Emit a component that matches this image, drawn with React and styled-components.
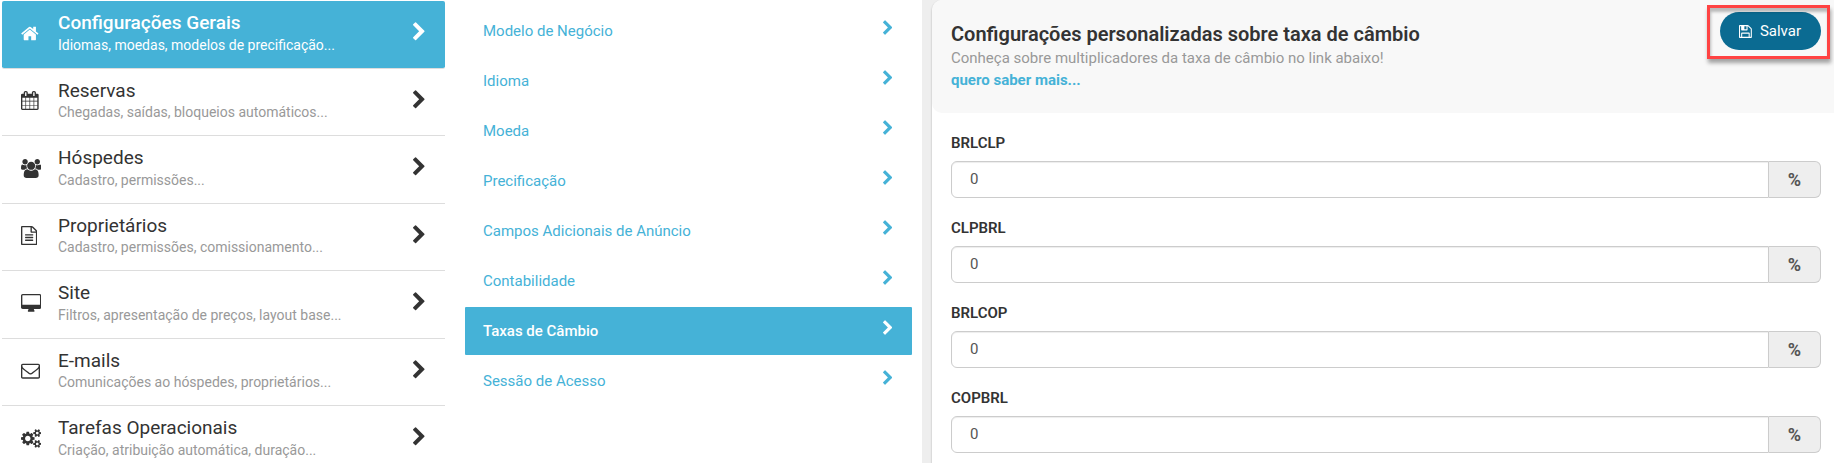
import React from 'react';
import styled, { createGlobalStyle, css } from 'styled-components';

const colors = {
  accent: '#45b2d7',
  text: '#333',
  muted: '#999',
  line: '#ddd',
  border: '#ccc',
};

const GlobalStyle = createGlobalStyle`
  *, *::before, *::after { box-sizing: border-box; }
  body {
    margin: 0;
    background: #fff;
    color: ${colors.text};
    font-family: Roboto, "Liberation Sans", sans-serif;
    font-size: 15px;
    line-height: 1.4;
  }
  a { text-decoration: none; }
`;

const glyphs = {
  home: {
    x: 64, width: 1664,
    d: 'M1472 992v480q0 26-19 45t-45 19h-384v-384h-256v384h-384q-26 0-45-19t-19-45v-480q0-1 .5-3t.5-3l575-474 575 474q1 2 1 6zm223-69l-62 74q-8 9-21 11h-3q-13 0-21-7l-692-577-692 577q-12 8-24 7-13-2-21-11l-62-74q-8-10-7-23.5t11-21.5l719-599q32-26 76-26t76 26l244 204v-195q0-14 9-23t23-9h192q14 0 23 9t9 23v408l219 182q10 8 11 21.5t-7 23.5z',
  },
  calendar: {
    x: 64, width: 1664,
    d: 'M192 1664h288v-288h-288v288zm352 0h320v-288h-320v288zm-352-352h288v-320h-288v320zm352 0h320v-320h-320v320zm-352-384h288v-288h-288v288zm736 736h320v-288h-320v288zm-384-736h320v-288h-320v288zm768 736h288v-288h-288v288zm-384-352h320v-320h-320v320zm-352-864v-288q0-13-9.5-22.5t-22.5-9.5h-64q-13 0-22.5 9.5t-9.5 22.5v288q0 13 9.5 22.5t22.5 9.5h64q13 0 22.5-9.5t9.5-22.5zm736 864h288v-320h-288v320zm-384-384h320v-288h-320v288zm384 0h288v-288h-288v288zm32-480v-288q0-13-9.5-22.5t-22.5-9.5h-64q-13 0-22.5 9.5t-9.5 22.5v288q0 13 9.5 22.5t22.5 9.5h64q13 0 22.5-9.5t9.5-22.5zm384-64v1280q0 52-38 90t-90 38h-1408q-52 0-90-38t-38-90v-1280q0-52 38-90t90-38h128v-96q0-66 47-113t113-47h64q66 0 113 47t47 113v96h384v-96q0-66 47-113t113-47h64q66 0 113 47t47 113v96h128q52 0 90 38t38 90z',
  },
  users: {
    x: 0, width: 1920,
    d: 'M593 896q-162 5-265 128h-134q-82 0-138-40.5t-56-118.5q0-353 124-353 6 0 43.5 21t97.5 42.5 119 21.5q67 0 133-23-5 37-5 66 0 139 81 256zm1071 637q0 120-73 189.5t-194 69.5h-874q-121 0-194-69.5t-73-189.5q0-53 3.5-103.5t14-109 26.5-108.5 43-97.5 62-81 85.5-53.5 111.5-20q10 0 43 21.5t73 48 107 48 135 21.5 135-21.5 107-48 73-48 43-21.5q61 0 111.5 20t85.5 53.5 62 81 43 97.5 26.5 108.5 14 109 3.5 103.5zm-1024-1277q0 106-75 181t-181 75-181-75-75-181 75-181 181-75 181 75 75 181zm704 384q0 159-112.5 271.5t-271.5 112.5-271.5-112.5-112.5-271.5 112.5-271.5 271.5-112.5 271.5 112.5 112.5 271.5zm576 225q0 78-56 118.5t-138 40.5h-134q-103-123-265-128 81-117 81-256 0-29-5-66 66 23 133 23 59 0 119-21.5t97.5-42.5 43.5-21q124 0 124 353zm-128-609q0 106-75 181t-181 75-181-75-75-181 75-181 181-75 181 75 75 181z',
  },
  file: {
    x: 128, width: 1536,
    d: 'M1596 380q28 28 48 76t20 88v1152q0 40-28 68t-68 28h-1344q-40 0-68-28t-28-68v-1600q0-40 28-68t68-28h896q40 0 88 20t76 48zm-444-244v376h376q-10-29-22-41l-313-313q-12-12-41-22zm384 1528v-1024h-416q-40 0-68-28t-28-68v-416h-768v1536h1280zm-1024-864q0-14 9-23t23-9h704q14 0 23 9t9 23v64q0 14-9 23t-23 9h-704q-14 0-23-9t-9-23v-64zm736 224q14 0 23 9t9 23v64q0 14-9 23t-23 9h-704q-14 0-23-9t-9-23v-64q0-14 9-23t23-9h704zm0 256q14 0 23 9t9 23v64q0 14-9 23t-23 9h-704q-14 0-23-9t-9-23v-64q0-14 9-23t23-9h704z',
  },
  desktop: {
    x: -64, width: 1920,
    d: 'M1728 992v-832q0-13-9.5-22.5t-22.5-9.5h-1600q-13 0-22.5 9.5t-9.5 22.5v832q0 13 9.5 22.5t22.5 9.5h1600q13 0 22.5-9.5t9.5-22.5zm128-832v1088q0 66-47 113t-113 47h-544q0 37 16 77.5t32 71 16 43.5q0 26-19 45t-45 19h-512q-26 0-45-19t-19-45q0-14 16-44t32-70 16-78h-544q-66 0-113-47t-47-113v-1088q0-66 47-113t113-47h1600q66 0 113 47t47 113z',
  },
  envelope: {
    x: 0, width: 1792,
    d: 'M1664 1504v-768q-32 36-69 66-268 206-426 338-51 43-83 67t-86.5 48.5-102.5 24.5h-2q-48 0-102.5-24.5t-86.5-48.5-83-67q-158-132-426-338-37-30-69-66v768q0 13 9.5 22.5t22.5 9.5h1472q13 0 22.5-9.5t9.5-22.5zm0-1051v-24.5l-.5-13-3-12.5-5.5-9-9-7.5-14-2.5h-1472q-13 0-22.5 9.5t-9.5 22.5q0 168 147 284 193 152 401 317 6 5 35 29.5t46 37.5 44.5 31.5 50.5 27.5 43 9h2q20 0 43-9t50.5-27.5 44.5-31.5 46-37.5 35-29.5q208-165 401-317 54-43 100.5-115.5t46.5-131.5zm128-37v1088q0 66-47 113t-113 47h-1472q-66 0-113-47t-47-113v-1088q0-66 47-113t113-47h1472q66 0 113 47t47 113z',
  },
  cogs: {
    x: 0, width: 1920,
    d: 'M896 896q0-106-75-181t-181-75-181 75-75 181 75 181 181 75 181-75 75-181zm768 512q0-52-38-90t-90-38-90 38-38 90q0 53 37.5 90.5t90.5 37.5 90.5-37.5 37.5-90.5zm0-1024q0-52-38-90t-90-38-90 38-38 90q0 53 37.5 90.5t90.5 37.5 90.5-37.5 37.5-90.5zm-384 421v185q0 10-7 19.5t-16 10.5l-155 24q-11 35-32 76 34 48 90 115 7 11 7 20 0 12-7 19-23 30-82.5 89.5t-78.5 59.5q-11 0-21-7l-115-90q-37 19-77 31-11 108-23 155-7 24-30 24h-186q-11 0-20-7.5t-10-17.5l-23-153q-34-10-75-31l-118 89q-7 7-20 7-11 0-21-8-144-133-144-160 0-9 7-19 10-14 41-53t47-61q-23-44-35-82l-152-24q-10-1-17-9.5t-7-19.5v-185q0-10 7-19.5t16-10.5l155-24q11-35 32-76-34-48-90-115-7-11-7-20 0-12 7-20 22-30 82-89t79-59q11 0 21 7l115 90q34-18 77-32 11-108 23-154 7-24 30-24h186q11 0 20 7.5t10 17.5l23 153q34 10 75 31l118-89q8-7 20-7 11 0 21 8 144 133 144 160 0 8-7 19-12 16-42 54t-45 60q23 48 34 82l152 23q10 2 17 10.5t7 19.5zm640 533v140q0 16-149 31-12 27-30 52 51 113 51 138 0 4-4 7-122 71-124 71-8 0-46-47t-52-68q-20 2-30 2t-30-2q-14 21-52 68t-46 47q-2 0-124-71-4-3-4-7 0-25 51-138-18-25-30-52-149-15-149-31v-140q0-16 149-31 13-29 30-52-51-113-51-138 0-4 4-7 4-2 35-20t59-34 30-16q8 0 46 46.5t52 67.5q20-2 30-2t30 2q51-71 92-112l6-2q4 0 124 70 4 3 4 7 0 25-51 138 17 23 30 52 149 15 149 31zm0-1024v140q0 16-149 31-12 27-30 52 51 113 51 138 0 4-4 7-122 71-124 71-8 0-46-47t-52-68q-20 2-30 2t-30-2q-14 21-52 68t-46 47q-2 0-124-71-4-3-4-7 0-25 51-138-18-25-30-52-149-15-149-31v-140q0-16 149-31 13-29 30-52-51-113-51-138 0-4 4-7 4-2 35-20t59-34 30-16q8 0 46 46.5t52 67.5q20-2 30-2t30 2q51-71 92-112l6-2q4 0 124 70 4 3 4 7 0 25-51 138 17 23 30 52 149 15 149 31z',
  },
  chevron: {
    x: 346, width: 1036,
    d: 'M1363 877l-742 742q-19 19-45 19t-45-19l-166-166q-19-19-19-45t19-45l531-531-531-531q-19-19-19-45t19-45l166-166q19-19 45-19t45 19l742 742q19 19 19 45t-19 45z',
  },
  save: {
    x: 128, width: 1536,
    d: 'M512 1536h768v-384h-768v384zm896 0h128v-896q0-14-10-38.5t-20-34.5l-281-281q-10-10-34-20t-39-10v416q0 40-28 68t-68 28h-576q-40 0-68-28t-28-68v-416h-128v1280h128v-416q0-40 28-68t68-28h832q40 0 68 28t28 68v416zm-384-928v-320q0-13-9.5-22.5t-22.5-9.5h-192q-13 0-22.5 9.5t-9.5 22.5v320q0 13 9.5 22.5t22.5 9.5h192q13 0 22.5-9.5t9.5-22.5zm640 32v928q0 40-28 68t-68 28h-1344q-40 0-68-28t-28-68v-1344q0-40 28-68t68-28h928q40 0 88 20t76 48l280 280q28 28 48 76t20 88z',
  },
};

const Svg = styled.svg`
  display: block;
  flex: none;
  height: ${(p) => p.$size}px;
  fill: currentColor;
`;

function Icon({ name, size }) {
  const { x, width, d } = glyphs[name];
  return (
    <Svg $size={size} viewBox={`${x} 0 ${width} 1792`} aria-hidden="true">
      <path d={d} />
    </Svg>
  );
}

const Page = styled.div`
  display: grid;
  grid-template-columns: 922fr 912fr;
  min-height: 100vh;
`;

const Menus = styled.div`
  display: grid;
  grid-template-columns: 443fr 447fr;
  column-gap: 20px;
  align-items: start;
  padding: 1px 10px 0 2px;
`;

const SectionNav = styled.nav`
  display: flex;
  flex-direction: column;
`;

const SectionLink = styled.a`
  display: flex;
  align-items: center;
  padding: 10px 20px 14px 19px;
  border-bottom: 1px solid ${colors.line};
  color: ${(p) => (p.$active ? '#fff' : colors.text)};
  ${(p) => p.$active && css`
    background: ${colors.accent};
    background-clip: padding-box;
    border-radius: 2px;
  `}
`;

const IconCell = styled.span`
  flex: none;
  width: 37px;
  padding-top: 2px;
`;

const SectionText = styled.span`
  flex: 1;
  min-width: 0;
`;

const SectionTitle = styled.span`
  display: block;
  font-size: 19px;
  line-height: 1.29;
  font-weight: ${(p) => (p.$active ? 500 : 400)};
`;

const SectionHint = styled.span`
  display: block;
  font-size: 14px;
  line-height: 18px;
  color: ${(p) => (p.$active ? '#fff' : colors.muted)};
`;

const TopicNav = styled.nav`
  display: flex;
  flex-direction: column;
  gap: 2px;
  padding-top: 6px;
`;

const TopicLink = styled.a`
  display: flex;
  justify-content: space-between;
  height: 48px;
  padding: 13px 20px 0 18px;
  border-radius: 1px;
  line-height: 22px;
  color: ${(p) => (p.$active ? '#fff' : colors.accent)};
  background: ${(p) => (p.$active ? colors.accent : 'transparent')};
  font-weight: ${(p) => (p.$active ? 500 : 400)};
`;

const Surround = styled.main`
  padding-left: 10px;
  background: #eee;
`;

const Panel = styled.section`
  height: 100%;
  background: #fff;
  border-top-left-radius: 10px;
  box-shadow: 0 1px 2px rgba(0, 0, 0, 0.3);
`;

const PanelHeader = styled.header`
  display: flex;
  justify-content: space-between;
  align-items: flex-start;
  min-height: 113px;
  padding: 5px 4px 0 19px;
  background: #f8f8f8;
  border-radius: 10px 0 0 10px;
`;

const Heading = styled.h1`
  margin: 0;
  font-size: 20px;
  font-weight: 600;
  line-height: 26px;
`;

const Intro = styled.div`
  padding-top: 16px;
`;

const Lead = styled.p`
  margin: 0;
  line-height: 22px;
  color: ${colors.muted};
`;

const MoreLink = styled.a`
  display: block;
  line-height: 22px;
  font-weight: 700;
  color: ${colors.accent};
`;

const Highlight = styled.div`
  position: relative;
  flex: none;
  padding: 7px 9px 9px 13px;
  &::after {
    content: '';
    position: absolute;
    inset: 0;
    border: 3px solid #ff4343;
    box-shadow: 1px 4px 4px rgba(0, 0, 0, 0.35), inset 1px 4px 3px rgba(0, 0, 0, 0.25);
    pointer-events: none;
  }
`;

const SaveButton = styled.button`
  display: flex;
  align-items: center;
  gap: 8px;
  height: 38px;
  padding: 0 20px 0 19px;
  border: 0;
  border-radius: 19px;
  background: #0b6b92;
  color: #fff;
  font: inherit;
  cursor: pointer;
`;

const Fields = styled.form`
  display: flex;
  flex-direction: column;
  gap: 19px;
  padding: 19px 13px 0 19px;
`;

const Field = styled.div`
  display: flex;
  flex-direction: column;
  gap: 7px;
`;

const Label = styled.label`
  line-height: 22px;
  font-weight: 600;
`;

const InputGroup = styled.div`
  display: flex;
  height: 37px;
`;

const Input = styled.input`
  flex: 1;
  min-width: 0;
  padding: 0 18px;
  border: 1px solid ${colors.border};
  border-radius: 6px 0 0 6px;
  box-shadow: inset 0 1px 1px rgba(0, 0, 0, 0.075);
  background: #fff;
  color: #555;
  font: inherit;
`;

const Addon = styled.span`
  display: flex;
  align-items: center;
  justify-content: center;
  width: 52px;
  border: 1px solid ${colors.border};
  border-left: 0;
  border-radius: 0 6px 6px 0;
  background: #eee;
  color: #555;
  font-size: 18px;
  font-weight: 700;
`;

const sections = [
  { icon: 'home', title: 'Configurações Gerais', hint: 'Idiomas, moedas, modelos de precificação...', active: true },
  { icon: 'calendar', title: 'Reservas', hint: 'Chegadas, saídas, bloqueios automáticos...' },
  { icon: 'users', title: 'Hóspedes', hint: 'Cadastro, permissões...' },
  { icon: 'file', title: 'Proprietários', hint: 'Cadastro, permissões, comissionamento...' },
  { icon: 'desktop', title: 'Site', hint: 'Filtros, apresentação de preços, layout base...' },
  { icon: 'envelope', title: 'E-mails', hint: 'Comunicações ao hóspedes, proprietários...' },
  { icon: 'cogs', title: 'Tarefas Operacionais', hint: 'Criação, atribuição automática, duração...' },
];

const topics = [
  'Modelo de Negócio',
  'Idioma',
  'Moeda',
  'Precificação',
  'Campos Adicionais de Anúncio',
  'Contabilidade',
  'Taxas de Câmbio',
  'Sessão de Acesso',
];

const activeTopic = 'Taxas de Câmbio';

const rates = ['BRLCLP', 'CLPBRL', 'BRLCOP', 'COPBRL'];

export default function App() {
  return (
    <>
      <GlobalStyle />
      <Page>
        <Menus>
          <SectionNav>
            {sections.map((s) => (
              <SectionLink key={s.title} href="#" $active={s.active}>
                <IconCell><Icon name={s.icon} size={19} /></IconCell>
                <SectionText>
                  <SectionTitle $active={s.active}>{s.title}</SectionTitle>
                  <SectionHint $active={s.active}>{s.hint}</SectionHint>
                </SectionText>
                <Icon name="chevron" size={20} />
              </SectionLink>
            ))}
          </SectionNav>
          <TopicNav>
            {topics.map((t) => (
              <TopicLink key={t} href="#" $active={t === activeTopic}>
                {t}
                <Icon name="chevron" size={16} />
              </TopicLink>
            ))}
          </TopicNav>
        </Menus>
        <Surround>
          <Panel>
            <PanelHeader>
              <Intro>
                <Heading>Configurações personalizadas sobre taxa de câmbio</Heading>
                <Lead>Conheça sobre multiplicadores da taxa de câmbio no link abaixo!</Lead>
                <MoreLink href="#">quero saber mais...</MoreLink>
              </Intro>
              <Highlight>
                <SaveButton type="button">
                  <Icon name="save" size={15} />
                  Salvar
                </SaveButton>
              </Highlight>
            </PanelHeader>
            <Fields>
              {rates.map((r) => (
                <Field key={r}>
                  <Label htmlFor={r}>{r}</Label>
                  <InputGroup>
                    <Input id={r} type="text" defaultValue="0" />
                    <Addon>%</Addon>
                  </InputGroup>
                </Field>
              ))}
            </Fields>
          </Panel>
        </Surround>
      </Page>
    </>
  );
}
